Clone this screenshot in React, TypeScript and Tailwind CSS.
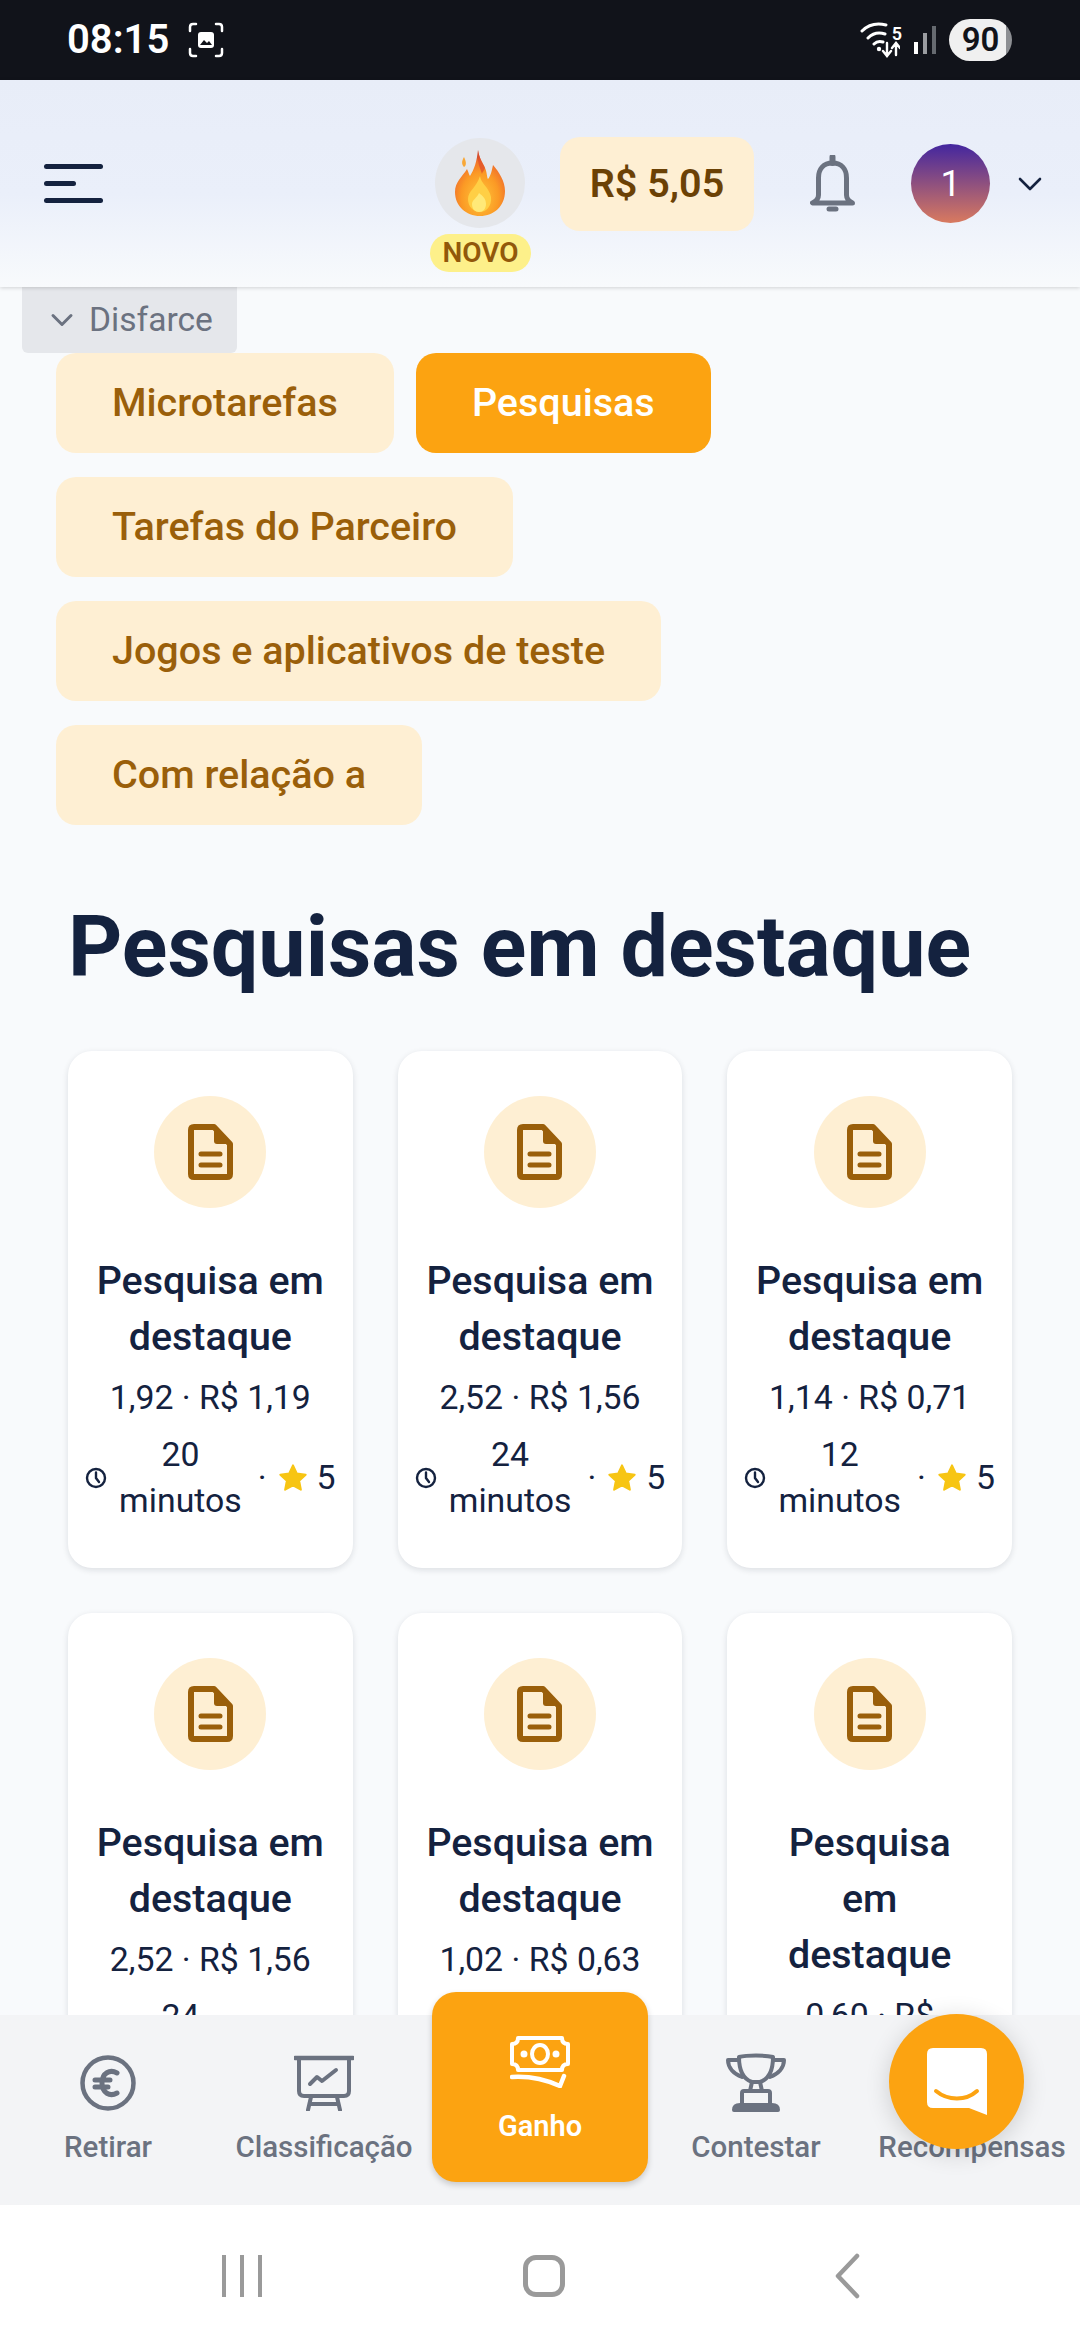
import { ChevronDown } from "lucide-react";

const TABS = [
  { label: "Microtarefas", active: false },
  { label: "Pesquisas", active: true },
  { label: "Tarefas do Parceiro", active: false },
  { label: "Jogos e aplicativos de teste", active: false },
  { label: "Com relação a", active: false },
];

const SURVEYS = [
  { title: ["Pesquisa em", "destaque"], price: ["1,92 · R$ 1,19"], mins: "20" },
  { title: ["Pesquisa em", "destaque"], price: ["2,52 · R$ 1,56"], mins: "24" },
  { title: ["Pesquisa em", "destaque"], price: ["1,14 · R$ 0,71"], mins: "12" },
  { title: ["Pesquisa em", "destaque"], price: ["2,52 · R$ 1,56"], mins: "24" },
  { title: ["Pesquisa em", "destaque"], price: ["1,02 · R$ 0,63"], mins: "10" },
  { title: ["Pesquisa", "em", "destaque"], price: ["0,60 · R$", "0,37"], mins: "6" },
];

function StatusBar() {
  return (
    <div className="flex h-[80px] shrink-0 items-center justify-between bg-[#11131a] pr-[68px] pl-[67px] text-white">
      <div className="flex items-center gap-[19px]">
        <span className="text-[40px] leading-none font-semibold">08:15</span>
        <svg width="36" height="36" viewBox="0 0 36 36" fill="none" stroke="white" strokeWidth="2.5" strokeLinecap="round">
          <path d="M2 9V5q0-3 3-3h3M28 2h3q3 0 3 3v4M34 27v4q0 3-3 3h-3M8 34H5q-3 0-3-3v-4" />
          <rect x="10" y="10" width="16" height="16" rx="3" fill="white" stroke="none" />
          <path d="M12 23l4-5 3 3 2-2 3 4z" fill="#11131a" stroke="none" />
        </svg>
      </div>
      <div className="flex items-center">
        <svg width="40" height="38" viewBox="0 0 40 38" fill="none" stroke="white" strokeWidth="3" strokeLinecap="round">
          <path d="M2 10C9 3 18 2 26 4M8 17c5-5 11-6 17-4M14 23c3-3 6-3 9-2" />
          <circle cx="19" cy="28" r="2.2" fill="white" stroke="none" />
          <path d="M27 22v12M23 30l4 5 4-5M36 34V23M32 27l4-5 4 5" strokeWidth="2.4" />
        </svg>
        <span className="mb-[13px] -ml-[8px] text-[18px] leading-none font-semibold">5</span>
        <div className="ml-[12px] flex items-end gap-[5px]">
          <div className="h-[12px] w-[4px] bg-white" />
          <div className="h-[21px] w-[4px] bg-[#9a9ca0]" />
          <div className="h-[28px] w-[4px] bg-[#666a70]" />
        </div>
        <div className="ml-[13px] flex h-[42px] w-[63px] items-center justify-center rounded-[21px] bg-[linear-gradient(90deg,#f0f0f0_90%,#8d8f93_90%)] text-[33px] font-semibold text-[#11131a]">
          90
        </div>
      </div>
    </div>
  );
}

function Flame() {
  return (
    <svg width="52" height="68" viewBox="0 0 52 68">
      <defs>
        <radialGradient id="fl" cx="50%" cy="72%" r="62%">
          <stop offset="0%" stopColor="#ffc63a" />
          <stop offset="60%" stopColor="#fb9a25" />
          <stop offset="88%" stopColor="#f2752a" />
          <stop offset="100%" stopColor="#cf4a2a" />
        </radialGradient>
      </defs>
      <path d="M10 8c-3 5-2 8 0 10 3-2 2-6 0-10z" fill="#f8a838" />
      <path d="M24 1c1 8 5 13 7 18 2 4 2 10 3 11 3-3 4-10 5-14 6 7 12 16 12 26 0 15-11 25-25 25S1 57 1 43c0-10 7-15 12-23 2 4 2 6 3 7 4-6 7-15 8-26z" fill="url(#fl)" />
      <path d="M24 1c1 8 5 13 7 18-1 3-3 4-3 6-2-7-5-10-4-24z" fill="#e0502b" opacity="0.75" />
      <path d="M26 27c1 8 9 11 11 21 1 9-5 15-11 15S14 58 14 50c0-8 9-12 12-23z" fill="#ffcf45" />
      <path d="M25 44c4 3 7 6 7 11 0 5-3 8-7 8s-7-3-7-8c0-4 5-6 7-11z" fill="#ffe978" />
    </svg>
  );
}

function BellIcon() {
  return (
    <svg className="ml-[56px]" width="45" height="58" viewBox="0 0 45 58" fill="none" stroke="#6b7280" strokeWidth="5" strokeLinecap="round" strokeLinejoin="round">
      <path d="M22.5 8c-9 0-14 6-14 15v17c0 3-2 6-6 8h40c-4-2-6-5-6-8V23c0-9-5-15-14-15z" />
      <path d="M22.5 2v6" strokeWidth="6" />
      <path d="M19 54h7" strokeWidth="5" />
    </svg>
  );
}

function Header() {
  return (
    <header className="z-20 flex h-[207px] shrink-0 items-center bg-[linear-gradient(180deg,#e8edf8_0%,#eaeffa_55%,#f8fafc_100%)] pr-[38px] pl-[44px] shadow-[0_1px_4px_rgba(0,0,0,0.16)]">
      <div className="flex w-[59px] flex-col gap-[12px]">
        <div className="h-[5px] w-full rounded-full bg-[#14223f]" />
        <div className="h-[5px] w-[32px] rounded-full bg-[#14223f]" />
        <div className="h-[5px] w-full rounded-full bg-[#14223f]" />
      </div>
      <div className="relative mt-[-1px] ml-auto flex h-[90px] w-[90px] items-center justify-center rounded-full bg-[#e5e7eb]">
        <Flame />
        <span className="absolute top-[96px] left-[-5px] flex h-[38px] w-[101px] items-center justify-center rounded-full bg-[#fdf08a] text-[28px] font-semibold text-[#92580a]">
          NOVO
        </span>
      </div>
      <div className="ml-[35px] flex h-[94px] w-[194px] items-center justify-center rounded-[20px] bg-[#feefd3] text-[39.5px] font-semibold text-[#6b4105]">
        R$ 5,05
      </div>
      <BellIcon />
      <div className="ml-[56px] flex h-[79px] w-[79px] items-center justify-center rounded-full bg-[linear-gradient(180deg,#43269f_0%,#d97a5f_100%)] text-[36px] text-white">
        1
      </div>
      <svg className="ml-[28px]" width="24" height="14" viewBox="0 0 24 14" fill="none" stroke="#14223f" strokeWidth="2.6" strokeLinecap="round" strokeLinejoin="round">
        <path d="M2 2l10 10L22 2" />
      </svg>
    </header>
  );
}

function FileIcon() {
  return (
    <svg width="45" height="56" viewBox="0 0 45 56" fill="none">
      <path d="M6 3h20l16 17v30q0 3-3 3H6q-3 0-3-3V6q0-3 3-3z" stroke="#9a5f0a" strokeWidth="6" strokeLinejoin="round" />
      <path d="M26 2l18 18H29q-3 0-3-3z" fill="#9a5f0a" />
      <path d="M13 30h19M13 41h19" stroke="#9a5f0a" strokeWidth="5" strokeLinecap="round" />
    </svg>
  );
}

function ClockIcon() {
  return (
    <svg className="shrink-0" width="22" height="24" viewBox="0 0 22 24" fill="none" stroke="#14223f" strokeWidth="2.4" strokeLinecap="round">
      <circle cx="11" cy="12" r="9" />
      <path d="M11 6.5V12l3 4" />
    </svg>
  );
}

function StarIcon() {
  return (
    <svg className="block shrink-0" width="32" height="32" viewBox="0 0 24 24" fill="#f7c513" stroke="#f7c513" strokeWidth="1.5" strokeLinejoin="round">
      <path d="M12 2.5l2.9 6.2 6.6.8-4.9 4.6 1.3 6.7L12 17.5l-5.9 3.3 1.3-6.7L2.5 9.5l6.6-.8z" />
    </svg>
  );
}

function SurveyCard({ title, price, mins }: { title: string[]; price: string[]; mins: string }) {
  return (
    <div className="flex h-[517px] flex-col items-center rounded-[24px] bg-white pt-[45px] text-[#14223f] shadow-[0_2px_6px_rgba(15,23,42,0.12)]">
      <div className="flex h-[112px] w-[112px] shrink-0 items-center justify-center rounded-full bg-[#feefd3]">
        <FileIcon />
      </div>
      <div className="mt-[45px] text-center text-[39.4px] leading-[56px] font-medium">
        {title.map((line) => (
          <div key={line}>{line}</div>
        ))}
      </div>
      <div className="mt-[5px] text-center text-[33.8px] leading-[56px]">
        {price.map((line) => (
          <div key={line}>{line}</div>
        ))}
      </div>
      <div className="mt-[6px] flex w-full items-center justify-center px-[18px] text-[33.8px] leading-[46px]">
        <ClockIcon />
        <div className="ml-[12px] text-center">
          {mins}
          <br />
          minutos
        </div>
        <span className="ml-[16px]">·</span>
        <span className="ml-[10px]"><StarIcon /></span>
        <span className="ml-[8px]">5</span>
      </div>
    </div>
  );
}

function Euro() {
  return (
    <svg width="56" height="56" viewBox="0 0 56 56" fill="none" stroke="#6b7280" strokeWidth="4.5" strokeLinecap="round">
      <circle cx="28" cy="28" r="25.5" />
      <path d="M37 18c-7-4-15 0-15 10s8 14 15 10M15 25h15M15 32h13" strokeWidth="5" />
    </svg>
  );
}

function Board() {
  return (
    <svg width="60" height="56" viewBox="0 0 60 56" fill="none" stroke="#6b7280" strokeWidth="4" strokeLinecap="round" strokeLinejoin="round">
      <path d="M1 3h58" strokeWidth="4.5" />
      <path d="M5 4v32q0 5 5 5h40q5 0 5-5V4" />
      <path d="M16 29l7-7 5 4 14-11" />
      <path d="M17 42l-3 13M43 42l3 13M16 49h28" />
    </svg>
  );
}

function Trophy() {
  return (
    <svg width="60" height="60" viewBox="0 0 60 60" fill="none" stroke="#6b7280" strokeWidth="4" strokeLinecap="round" strokeLinejoin="round">
      <path d="M13 4c8-2 26-2 34 0 0 12-4 22-13 25h-8C17 26 13 16 13 4z" />
      <path d="M13 7H2c0 8 6 14 14 17M47 7h11c0 8-6 14-14 17" />
      <path d="M26 29l-2 9M34 29l2 9" />
      <path d="M16 51V40q0-2 2-2h24q2 0 2 2v11" />
      <path d="M8 57q0-5 6-5h32q6 0 6 5z" fill="#6b7280" />
    </svg>
  );
}

function Money() {
  return (
    <svg width="60" height="52" viewBox="0 0 60 52" fill="none" stroke="white" strokeWidth="4" strokeLinecap="round" strokeLinejoin="round">
      <path d="M8 2h44q0 6 6 6v20q-6 0-6 6H8q0-6-6-6V8q6 0 6-6z" />
      <ellipse cx="30" cy="18" rx="8" ry="9" />
      <circle cx="14" cy="18" r="1.5" fill="white" />
      <circle cx="46" cy="18" r="1.5" fill="white" />
      <path d="M2 41c16-1 30 1 48 9l4-10" strokeWidth="4.5" />
    </svg>
  );
}

function NavItem({ icon, label }: { icon: React.ReactNode; label: string }) {
  return (
    <div className="flex flex-col items-center pt-[38px]">
      <div className="flex h-[60px] items-center">{icon}</div>
      <span className="mt-[16px] text-[29.5px] leading-[36px] font-medium whitespace-nowrap text-[#6b7280]">{label}</span>
    </div>
  );
}

function BottomNav() {
  return (
    <nav className="relative z-10 grid h-[190px] shrink-0 grid-cols-5 bg-[#f3f4f6]">
      <NavItem icon={<Euro />} label="Retirar" />
      <NavItem icon={<Board />} label="Classificação" />
      <div className="-mt-[23px] flex h-[190px] flex-col items-center rounded-[24px] bg-[#fca311] pt-[44px] shadow-[0_3px_6px_rgba(0,0,0,0.18)]">
        <Money />
        <span className="mt-[20px] text-[29px] leading-[36px] font-semibold text-white">Ganho</span>
      </div>
      <NavItem icon={<Trophy />} label="Contestar" />
      <NavItem icon={<span />} label="Recompensas" />
      {/* Floating chat button */}
      <button className="absolute top-[-1px] left-[889px] flex h-[135px] w-[135px] items-center justify-center rounded-full bg-[#fca311] shadow-[0_4px_24px_rgba(0,0,0,0.16)]">
        <svg width="60" height="67" viewBox="0 0 60 67">
          <path d="M6 0h48q6 0 6 6v61L42 60H6q-6 0-6-6V6q0-6 6-6z" fill="white" />
          <path d="M9 43c12 10 30 10 41 0" fill="none" stroke="#fca311" strokeWidth="4" strokeLinecap="round" />
        </svg>
      </button>
    </nav>
  );
}

function SystemNav() {
  return (
    <div className="flex h-[135px] shrink-0 items-center bg-white pt-[6px] pl-[222px]">
      <div className="flex gap-[14px]">
        <div className="h-[42px] w-[4px] bg-[#9a9a9a]" />
        <div className="h-[42px] w-[4px] bg-[#9a9a9a]" />
        <div className="h-[42px] w-[4px] bg-[#9a9a9a]" />
      </div>
      <div className="ml-[261px] h-[42px] w-[42px] rounded-[13px] border-[5px] border-[#9a9a9a]" />
      <svg className="ml-[269px]" width="26" height="46" viewBox="0 0 26 46" fill="none" stroke="#9a9a9a" strokeWidth="4.5" strokeLinecap="round" strokeLinejoin="round">
        <path d="M23 3L4 23l19 20" />
      </svg>
    </div>
  );
}

export default function App() {
  return (
    <div className="flex h-screen flex-col overflow-hidden bg-[#f8fafc] font-[Roboto,sans-serif]">
      <StatusBar />
      <Header />

      <main className="min-h-0 flex-1 overflow-hidden">
        <div className="ml-[22px] flex h-[66px] w-[215px] items-center gap-[9px] rounded-b-[6px] bg-[#e5e7eb] pl-[22px] text-[33.6px] text-[#6b7280]">
          <ChevronDown className="shrink-0" size={36} strokeWidth={2} />
          Disfarce
        </div>

        <div className="flex flex-wrap gap-x-[22px] gap-y-[24px] pr-[56px] pl-[56px]">
          {TABS.map((tab) => (
            <div
              key={tab.label}
              className={
                tab.active
                  ? "flex h-[100px] items-center rounded-[20px] bg-[#fca311] px-[56px] text-[39.5px] font-medium text-white"
                  : "flex h-[100px] items-center rounded-[20px] bg-[#feefd3] px-[56px] text-[39.5px] font-medium text-[#9a5f0a]"
              }
            >
              {tab.label}
            </div>
          ))}
        </div>

        <h1 className="mt-[70px] px-[68px] text-[84.4px] leading-[106px] font-bold text-[#14223f]">Pesquisas em destaque</h1>

        <div className="mt-[50px] grid grid-cols-3 gap-[45px] px-[68px]">
          {SURVEYS.map((survey, i) => (
            <SurveyCard key={i} {...survey} />
          ))}
        </div>
      </main>

      <BottomNav />
      <SystemNav />
    </div>
  );
}
